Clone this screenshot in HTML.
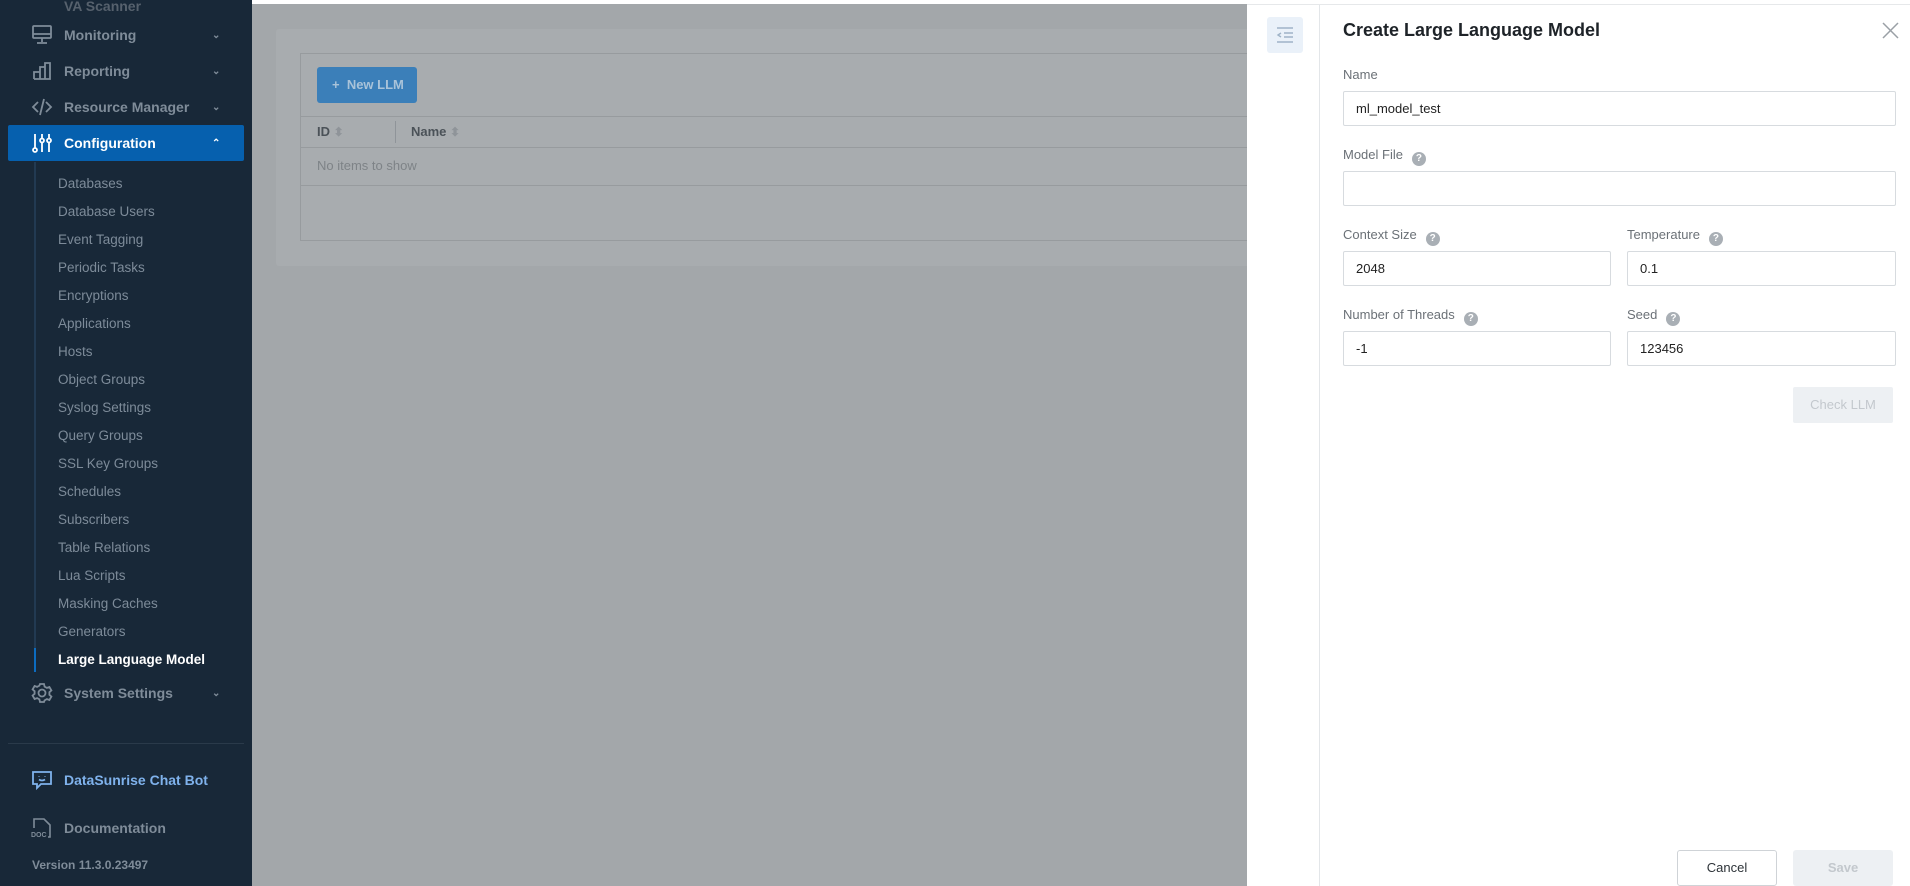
<!DOCTYPE html>
<html><head><meta charset="utf-8"><style>
*{box-sizing:border-box;margin:0;padding:0}
body{width:1910px;height:886px;overflow:hidden;font-family:"Liberation Sans",sans-serif;background:#a3a7aa;position:relative}
.sb{position:absolute;left:0;top:0;width:252px;height:886px;background:#182838}
.mi{position:absolute;left:0;width:252px;height:36px;display:flex;align-items:center;color:#7f8c99;font-size:14px;font-weight:bold}
.mi svg{position:absolute;left:31px}
.mi span.t{position:absolute;left:64px}
.mi .ch{position:absolute;left:212px;font-size:10px}
.cfg{left:8px;width:236px;background:#0660ae;color:#fff;border-radius:2px}
.sub{position:absolute;left:58px;font-size:13.5px;color:#7d8b99}
.top{position:absolute;left:252px;top:0;width:1658px;height:4px;background:#fff}
.card{position:absolute;left:276px;top:29px;width:980px;height:237px;background:#a8acaf;border-radius:3px}
.inner{position:absolute;left:300px;top:53px;width:960px;height:188px;border:1px solid #979b9e;border-right:none}
.btn{position:absolute;left:317px;top:67px;width:100px;height:36px;background:#3b7fb9;border-radius:3px;color:#a9c3d9;font-size:13px;font-weight:bold;line-height:36px;padding-left:15px}
.hl{position:absolute;left:300px;width:950px;height:1px;background:#979b9e}
.panel{position:absolute;left:1247px;top:4px;width:663px;height:882px;background:#fff;border-top:1px solid #e6e8ea}
.strip{position:absolute;left:1319px;top:5px;width:1px;height:881px;background:#e3e6e9}
.lbl{position:absolute;font-size:13px;color:#6b7177}
.q{display:inline-block;width:14px;height:14px;border-radius:50%;background:#a9afb5;color:#fff;font-size:10px;font-weight:bold;text-align:center;line-height:14px;margin-left:9px;vertical-align:-2px}
.inp{position:absolute;height:35px;border:1px solid #d7dbdf;border-radius:2px;font-size:13px;color:#222;line-height:33px;padding-left:12px}
</style></head><body>
<div class="sb">
 <div class="mi" style="top:-12px"><span class="t" style="color:#56616d">VA Scanner</span></div>
 <div class="mi" style="top:17px"><svg width="22" height="22" viewBox="0 0 22 22" fill="none" stroke="#7f8c99" stroke-width="1.8"><rect x="2" y="2" width="18" height="12" rx="1"/><path d="M2 10h18M11 14v4M6 19h10"/></svg><span class="t">Monitoring</span><span class="ch">⌄</span></div>
 <div class="mi" style="top:53px"><svg width="22" height="22" viewBox="0 0 22 22" fill="none" stroke="#7f8c99" stroke-width="1.8"><path d="M3 19V12h6V19M9 19V7h5v12M14 19V3h5v16H3"/></svg><span class="t">Reporting</span><span class="ch">⌄</span></div>
 <div class="mi" style="top:89px"><svg width="22" height="22" viewBox="0 0 22 22" fill="none" stroke="#7f8c99" stroke-width="1.8"><path d="M7 6l-5 5 5 5M15 6l5 5-5 5M13 3l-4 16"/></svg><span class="t">Resource Manager</span><span class="ch">⌄</span></div>
 <div class="mi cfg" style="top:125px"><svg style="left:23px" width="22" height="22" viewBox="0 0 22 22" fill="none" stroke="#fff" stroke-width="1.8"><path d="M4 2v14M11 2v4M18 2v4M11 11v9M18 11v9"/><circle cx="4" cy="18" r="2"/><circle cx="11" cy="8.5" r="2"/><circle cx="18" cy="8.5" r="2"/></svg><span class="t" style="left:56px">Configuration</span><span class="ch" style="left:204px">⌃</span></div>
 <div style="position:absolute;left:34px;top:162px;width:2px;height:510px;background:#223a52"></div>
 <div style="position:absolute;left:34px;top:648px;width:2px;height:24px;background:#0c6cc0"></div>
 <div class="sub" style="top:176px">Databases</div>
 <div class="sub" style="top:204px">Database Users</div>
 <div class="sub" style="top:232px">Event Tagging</div>
 <div class="sub" style="top:260px">Periodic Tasks</div>
 <div class="sub" style="top:288px">Encryptions</div>
 <div class="sub" style="top:316px">Applications</div>
 <div class="sub" style="top:344px">Hosts</div>
 <div class="sub" style="top:372px">Object Groups</div>
 <div class="sub" style="top:400px">Syslog Settings</div>
 <div class="sub" style="top:428px">Query Groups</div>
 <div class="sub" style="top:456px">SSL Key Groups</div>
 <div class="sub" style="top:484px">Schedules</div>
 <div class="sub" style="top:512px">Subscribers</div>
 <div class="sub" style="top:540px">Table Relations</div>
 <div class="sub" style="top:568px">Lua Scripts</div>
 <div class="sub" style="top:596px">Masking Caches</div>
 <div class="sub" style="top:624px">Generators</div>
 <div class="sub" style="top:652px;color:#fff;font-weight:bold">Large Language Model</div>
 <div class="mi" style="top:675px"><svg width="22" height="22" viewBox="0 0 22 22" fill="none" stroke="#7f8c99" stroke-width="1.8"><circle cx="11" cy="11" r="3.5"/><path d="M9 2h4l.6 2.6 2.3 1.3 2.5-.9 2 3.4-2 1.8v2.6l2 1.8-2 3.4-2.5-.9-2.3 1.3L13 20H9l-.6-2.6-2.3-1.3-2.5.9-2-3.4 2-1.8V9.2l-2-1.8 2-3.4 2.5.9 2.3-1.3z"/></svg><span class="t">System Settings</span><span class="ch">⌄</span></div>
 <div style="position:absolute;left:8px;top:743px;width:236px;height:1px;background:#2a3a4a"></div>
 <div class="mi" style="top:762px;color:#7fb2ec"><svg width="22" height="22" viewBox="0 0 22 22" fill="none" stroke="#7fb2ec" stroke-width="1.8"><path d="M2 3h18v12H10l-4 4v-4H2z"/><path d="M8 7v.5M14 7v.5M8 10.5q3 2 6 0"/></svg><span class="t">DataSunrise Chat Bot</span></div>
 <div class="mi" style="top:810px"><svg width="22" height="24" viewBox="0 0 22 24" fill="none" stroke="#7f8c99" stroke-width="1.6"><path d="M3 12V3h10l6 6v12h-2"/></svg><span style="position:absolute;left:31px;top:22px;font-size:7px;color:#7f8c99">DOC</span><span class="t">Documentation</span></div>
 <div style="position:absolute;left:32px;top:858px;font-size:12px;font-weight:bold;color:#7f8c99">Version 11.3.0.23497</div>
</div>
<div class="top"></div>
<div class="card"></div>
<div class="inner"></div>
<div class="btn">+&nbsp; New LLM</div>
<div class="hl" style="top:116px"></div>
<div class="hl" style="top:147px"></div>
<div class="hl" style="top:185px"></div>
<div style="position:absolute;left:317px;top:124px;font-size:13px;font-weight:bold;color:#4b5258">ID <span style="color:#8f9499;font-size:12px">⬍</span></div>
<div style="position:absolute;left:395px;top:121px;width:1px;height:22px;background:#8f9499"></div>
<div style="position:absolute;left:411px;top:124px;font-size:13px;font-weight:bold;color:#4b5258">Name <span style="color:#8f9499;font-size:12px">⬍</span></div>
<div style="position:absolute;left:317px;top:158px;font-size:13px;color:#7e8387">No items to show</div>

<div class="panel"></div>
<div class="strip"></div>
<div style="position:absolute;left:1267px;top:17px;width:36px;height:36px;background:#eaf1f9;border-radius:3px"></div>
<svg style="position:absolute;left:1276px;top:26px" width="18" height="18" viewBox="0 0 18 18" fill="none" stroke="#9fb3c7" stroke-width="1.4"><path d="M1 2h16M8 7h9M8 11h9M1 16h16M5 7l-3 2 3 2"/></svg>
<div style="position:absolute;left:1343px;top:20px;font-size:18px;font-weight:bold;color:#1e2328">Create Large Language Model</div>
<svg style="position:absolute;left:1882px;top:22px" width="17" height="17" viewBox="0 0 17 17" stroke="#9aa0a6" stroke-width="1.5"><path d="M1 1l15 15M16 1L1 16"/></svg>
<div class="lbl" style="left:1343px;top:67px">Name</div>
<div class="inp" style="left:1343px;top:91px;width:553px">ml_model_test</div>
<div class="lbl" style="left:1343px;top:147px">Model File<span class="q">?</span></div>
<div class="inp" style="left:1343px;top:171px;width:553px"></div>
<div class="lbl" style="left:1343px;top:227px">Context Size<span class="q">?</span></div>
<div class="inp" style="left:1343px;top:251px;width:268px">2048</div>
<div class="lbl" style="left:1627px;top:227px">Temperature<span class="q">?</span></div>
<div class="inp" style="left:1627px;top:251px;width:269px">0.1</div>
<div class="lbl" style="left:1343px;top:307px">Number of Threads<span class="q">?</span></div>
<div class="inp" style="left:1343px;top:331px;width:268px">-1</div>
<div class="lbl" style="left:1627px;top:307px">Seed<span class="q">?</span></div>
<div class="inp" style="left:1627px;top:331px;width:269px">123456</div>
<div style="position:absolute;left:1793px;top:387px;width:100px;height:36px;background:#edf0f3;border-radius:2px;color:#c3c8cd;font-size:13px;text-align:center;line-height:36px">Check LLM</div>
<div style="position:absolute;left:1677px;top:850px;width:100px;height:36px;border:1px solid #cfd3d7;border-radius:3px;color:#2d3338;font-size:13px;text-align:center;line-height:34px">Cancel</div>
<div style="position:absolute;left:1793px;top:850px;width:100px;height:36px;background:#edf0f3;border-radius:3px;color:#c3c8cd;font-size:13px;font-weight:bold;text-align:center;line-height:36px">Save</div>
</body></html>
